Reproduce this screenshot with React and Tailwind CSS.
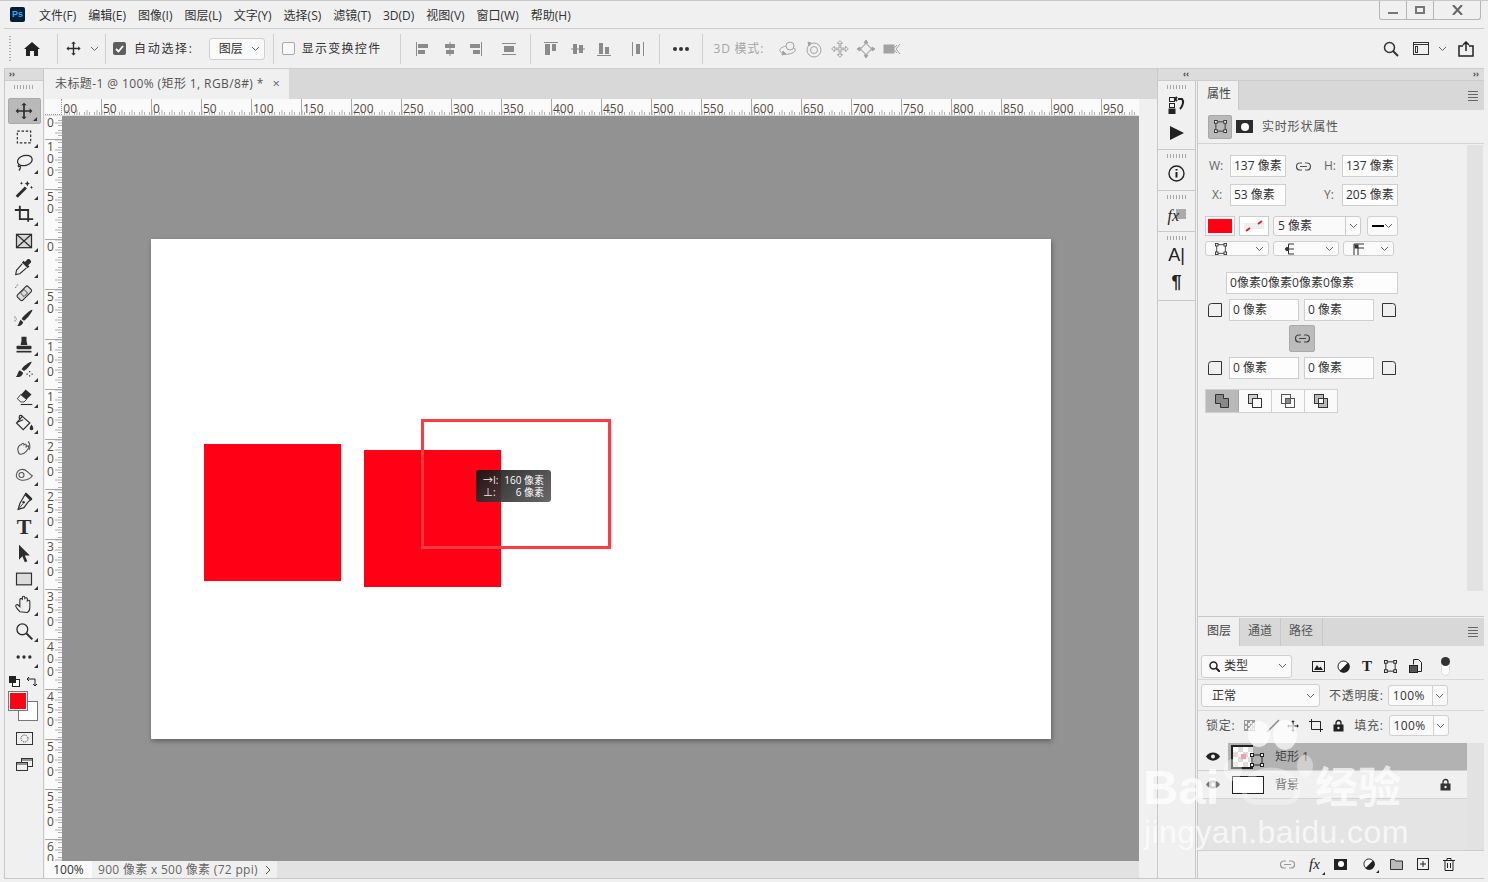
const menus = ["文件(F)", "编辑(E)", "图像(I)", "图层(L)", "文字(Y)", "选择(S)", "滤镜(T)", "3D(D)", "视图(V)", "窗口(W)", "帮助(H)"];
const rulerLabels = ["50", "0", "50", "100", "150", "200", "250", "300", "350", "400", "450", "500", "550", "600", "650", "700", "750", "800", "850", "900", "950"];
const vRuler = ["100", "50", "0", "50", "100", "150", "200", "250", "300", "350", "400", "450", "500", "550", "600"];

const Ico = ({ size = 20, view = 24, className = "text-[#2d2d2d]", children }) => (
  <svg width={size} height={size} viewBox={`0 0 ${view} ${view}`} className={`shrink-0 ${className}`} fill="none" stroke="none">
    {children}
  </svg>
);

const Chevron = ({ className = "text-[#666]" }) => (
  <svg width="9" height="6" viewBox="0 0 9 6" className={`shrink-0 ${className}`} fill="none" stroke="currentColor">
    <path d="M1 1l3.500 3.500L8 1" />
  </svg>
);

const Sep = ({ className = "" }) => <div className={`w-px h-[30px] bg-[#d0d0d0] shrink-0 ${className}`} />;
const Grip = () => <div className="h-[4px] w-[20px] mx-auto bg-[repeating-linear-gradient(90deg,#a8a8a8_0,#a8a8a8_1px,transparent_1px,transparent_3px)]" />;
const Menu = () => (
  <div className="flex flex-col gap-[2px] w-[10px]">
    <div className="h-px bg-[#666]" />
    <div className="h-px bg-[#666]" />
    <div className="h-px bg-[#666]" />
    <div className="h-px bg-[#666]" />
  </div>
);

const moveD = "M12 2l3.200 3.200H13V11h5.800V8.800L22 12l-3.200 3.200V13H13v5.800h2.200L12 22l-3.200-3.200H11V13H5.200v2.200L2 12l3.200-3.200V11H11V5.200H8.800z";
const Check = () => (
  <div className="w-[13px] h-[13px] rounded-[2px] bg-[#5f5f5f] flex items-center justify-center shrink-0">
    <svg width="9" height="8" viewBox="0 0 9 8" fill="none" stroke="white" strokeWidth="1.800"><path d="M1 4l2.500 2.500L8 1" /></svg>
  </div>
);

const AlignH = ({ type }) => (
  <Ico size={16} view={16} className="text-[#8b8b8b]">
    <g fill="currentColor">
      {type === 0 && <><rect x="1" y="1" width="1" height="14" /><rect x="3" y="3" width="10" height="4" /><rect x="3" y="9" width="7" height="4" /></>}
      {type === 1 && <><rect x="7.500" y="1" width="1" height="14" /><rect x="3" y="3" width="10" height="4" /><rect x="4" y="9" width="8" height="4" /></>}
      {type === 2 && <><rect x="14" y="1" width="1" height="14" /><rect x="3" y="3" width="10" height="4" /><rect x="6" y="9" width="7" height="4" /></>}
      {type === 3 && <><rect x="1" y="2" width="14" height="1" /><rect x="1" y="13" width="14" height="1" /><rect x="3" y="5" width="10" height="6" /></>}
      {type === 4 && <><rect x="1" y="1" width="14" height="1" /><rect x="2" y="3" width="5" height="11" /><rect x="9" y="3" width="4" height="7" /></>}
      {type === 5 && <><rect x="1" y="7.500" width="14" height="1" /><rect x="3" y="3" width="4" height="10" /><rect x="9" y="4" width="4" height="8" /></>}
      {type === 6 && <><rect x="1" y="14" width="14" height="1" /><rect x="3" y="2" width="4" height="11" /><rect x="9" y="6" width="4" height="7" /></>}
      {type === 7 && <><rect x="2" y="1" width="1" height="14" /><rect x="13" y="1" width="1" height="14" /><rect x="6" y="3" width="4" height="10" /></>}
    </g>
  </Ico>
);

const Mode3D = ({ type }) => (
  <Ico size={20} view={20} className="text-[#a2a2a2]">
    <g stroke="currentColor" fill="none">
      {type === 0 && <><circle cx="12" cy="7" r="4" /><path d="M8 7C4 8 1 10 2 12s5 4 9 3 7-2 6-5c-.5-1-1-1.500-2-2" /><path d="M5 12l3 3-4 1z" fill="currentColor" /></>}
      {type === 1 && <><circle cx="10" cy="11" r="7" /><circle cx="10" cy="11" r="3.500" /><path d="M4 3l3 1-2 3z" fill="currentColor" /></>}
      {type === 2 && <path d={moveD} transform="translate(0 0) scale(.83)" strokeWidth="1.200" />}
      {type === 3 && <><rect x="6" y="6" width="8" height="8" transform="rotate(45 10 10)" /><path d="M10 1l2 3H8zM10 19l2-3H8zM1 10l3-2v4zM19 10l-3-2v4z" fill="currentColor" /></>}
      {type === 4 && <><rect x="2" y="6" width="10" height="8" fill="currentColor" /><path d="M12 9l3-3M12 11l3 3M18 5l-4 5 4 5" /></>}
    </g>
  </Ico>
);

const Tool = ({ active, children }) => (
  <div className={`h-[26px] w-[33px] mx-auto flex items-center justify-center relative rounded-[2px] ${active ? "bg-[#b9b9b9] border border-[#aaa]" : ""}`}>
    {children}
    <div className="absolute right-[3px] bottom-[2px] w-0 h-0 border-l-[4px] border-l-transparent border-b-[4px] border-b-[#333]" />
  </div>
);

const toolIcons = [
  <path key="a" d={moveD} fill="currentColor" />,
  <rect key="b" x="4" y="5" width="16" height="14" stroke="currentColor" strokeWidth="1.400" strokeDasharray="3 2" />,
  <g key="c" stroke="currentColor" strokeWidth="1.500"><ellipse cx="13" cy="9" rx="9" ry="6" transform="rotate(-15 13 9)" /><path d="M6 14c-2 2 0 3 1 2s1 3-1 5" /></g>,
  <g key="d" fill="currentColor"><path d="M2 20l11-11 2.500 2.500-11 11z" /><path d="M16 2l1 2.500 2 1-2 1-1 2.500-1-2.500-2-1 2-1zM21 8l.7 1.500 1.300.5-1.300.5-.7 1.500-.7-1.500-1.300-.5 1.300-.5zM9 3l.6 1.400L11 5l-1.400.6L9 7l-.6-1.400L7 5l1.400-.6z" /></g>,
  <g key="e" stroke="currentColor" strokeWidth="2.200"><path d="M1 6h16v14" /><path d="M7 1v16h16" /></g>,
  <g key="f" stroke="currentColor" strokeWidth="1.500"><rect x="3" y="4" width="18" height="16" fill="#d8d8d8" /><path d="M3 4l18 16M21 4L3 20" /></g>,
  <g key="g"><path d="M16 3c2-2 6 2 4 4l-3 3 1.500 1.500-2 2-7-7 2-2L13 6z" fill="currentColor" /><path d="M10 8l-7 8-1 5 5-1 8-7" stroke="currentColor" strokeWidth="1.300" /></g>,
  <g key="h"><rect x="3" y="8" width="18" height="9" rx="2" transform="rotate(-45 12 12)" fill="#ddd" stroke="currentColor" strokeWidth="1.300" /><rect x="9" y="9" width="6" height="6" transform="rotate(-45 12 12)" stroke="currentColor" /><path d="M2 6a4 4 0 0 1 4-4" stroke="currentColor" strokeDasharray="1.500 1.500" /></g>,
  <g key="i" fill="currentColor"><path d="M22 1c1 1-6 11-10 13l-3-2C11 8 21 0 22 1z" /><path d="M8 13l3 3c-1 4-5 5-7 4 2-1 2-5 4-7z" /><path d="M1 9c1 1 3 3 1 5s-4-2-1-5z" stroke="currentColor" strokeWidth=".5" fillOpacity="0" /></g>,
  <g key="j" fill="currentColor"><path d="M9 2h6v4c0 3 1 4 1 6H8c0-2 1-3 1-6z" /><rect x="3" y="13" width="18" height="4" rx="1" /><rect x="3" y="19" width="18" height="2" /></g>,
  <g key="k" fill="currentColor"><path d="M21 1c1 1-5 9-9 11l-3-2c2-4 11-10 12-9z" /><path d="M7 11l4 3c-1 5-6 6-9 5 3-2 2-6 5-8z" /><path d="M15 15h1.500v1.500H15zM18 12h1.500v1.500H18zM18 17h1.500v1.500H18zM21 15h1.500v1.500H21z" /></g>,
  <g key="l"><path d="M14 3l7 6-9 9H8l-4-4z" fill="currentColor" /><path d="M4 14l4 4h4l3-3-7-6z" fill="#eee" stroke="currentColor" /><path d="M8 21h14" stroke="currentColor" strokeWidth="1.300" /></g>,
  <g key="m" stroke="currentColor" strokeWidth="1.400"><path d="M10 4l9 8-8 8-8-8z" /><path d="M4 11l7-3" /><path d="M10 4c-3-3-5 0-3 4" /><path d="M21 15c2 3 2 5 0 5s-2-2 0-5z" fill="currentColor" /></g>,
  <g key="n" stroke="#555" strokeWidth="1.300"><path d="M5 15c-2-4 2-9 4-8 1-3 3-2 3 0 2-2 4 0 2 3l3-2c2 1-1 7-5 9s-6 2-7-2z" /><path d="M17 3c2 2 3 7 1 10" /></g>,
  <g key="o" stroke="#555" strokeWidth="1.300"><path d="M3 11c2-7 9-7 13-3 2 2 4 4 6 5-2 4-9 6-14 5-4-1-6-4-5-7z" /><circle cx="9" cy="12" r="3" /></g>,
  <g key="p"><path d="M14 3l7 7-4 3-5 7-7 2 2-7 4-7z" stroke="currentColor" strokeWidth="1.400" /><path d="M15 2l7 7-3 2-6-6z" fill="currentColor" /><path d="M5 22l6-7" stroke="currentColor" /><circle cx="11.500" cy="13.500" r="1.500" fill="currentColor" /></g>,
  null,
  <path key="r" d="M6 2l13 13h-6l3 7-3 1-3-7-4 4z" fill="currentColor" />,
  <rect key="s" x="3" y="5" width="18" height="14" fill="#dcdcdc" stroke="currentColor" strokeWidth="1.400" />,
  <path key="t" d="M7 20c-2-2-5-5-5-7 0-1 2-2 3-1l2 2V6c0-2 2-2 3-1V3c0-2 3-2 3 0v1c1-1 3-1 3 1v2c1-1 3-1 3 1v7c0 3-1 5-3 6z" stroke="currentColor" strokeWidth="1.300" />,
  <g key="u" stroke="currentColor" strokeWidth="1.600"><circle cx="10" cy="10" r="6.500" /><path d="M15 15l7 7" strokeWidth="2.400" /></g>,
  <g key="v" fill="currentColor"><circle cx="5" cy="12" r="2" /><circle cx="12" cy="12" r="2" /><circle cx="19" cy="12" r="2" /></g>,
];

const Field = ({ children, className = "" }) => (
  <div className={`h-[22px] bg-[#fdfdfd] border border-[#cfcfcf] flex items-center pl-[3px] text-[12px] text-[#333] shrink-0 whitespace-nowrap overflow-hidden ${className}`}>{children}</div>
);

const Drop = ({ className = "", children }) => (
  <div className={`bg-[#fafafa] border border-[#cfcfcf] rounded-[3px] flex items-center justify-between pr-[4px] shrink-0 ${className}`}>
    {children}
    <Chevron />
  </div>
);

const Corner = ({ r }) => (
  <svg width="14" height="14" viewBox="0 0 14 14" fill="none" stroke="#333" className="shrink-0">
    <path d={r ? "M.5.5h10a3 3 0 0 1 3 3v10H.5z" : "M3.500.5h10v13H.5v-10a3 3 0 0 1 3-3z"} />
  </svg>
);

const LinkIco = ({ c = "#555" }) => (
  <svg width="15" height="9" viewBox="0 0 15 9" fill="none" stroke={c} strokeWidth="1.200">
    <path d="M6 1H4a3.500 3.500 0 0 0 0 7h2M9 1h2a3.500 3.500 0 0 1 0 7H9M4 4.500h7" />
  </svg>
);

const ShapeIco = ({ size = 14, c = "#333" }) => (
  <svg width={size} height={size} viewBox="0 0 14 14" fill="none" stroke={c} className="shrink-0">
    <rect x="2" y="2" width="10" height="10" />
    <rect x=".5" y=".5" width="3" height="3" fill="#eee" />
    <rect x="10.500" y=".5" width="3" height="3" fill="#eee" />
    <rect x=".5" y="10.500" width="3" height="3" fill="#eee" />
    <rect x="10.500" y="10.500" width="3" height="3" fill="#eee" />
  </svg>
);

const CornerTip = () => <div className="absolute -bottom-[3px] -right-[4px] w-0 h-0 border-l-[3px] border-l-transparent border-b-[3px] border-b-[#222]" />;

const Eye = ({ c = "#222" }) => (
  <svg width="14" height="9" viewBox="0 0 14 9"><path d="M0 4.500C3-1 11-1 14 4.500 11 10 3 10 0 4.500z" fill={c} /><circle cx="7" cy="4.500" r="2" fill="#eee" /></svg>
);

const Lock = ({ c = "#222" }) => (
  <svg width="11" height="13" viewBox="0 0 11 13"><path d="M3 6V4a2.500 2.500 0 0 1 5 0v2" fill="none" stroke={c} strokeWidth="1.300" /><rect x=".5" y="5.500" width="10" height="7" fill={c} /><circle cx="5.500" cy="9" r="1.200" fill="#eee" /></svg>
);

export default function App() {
  return (
    <div className="relative w-[1488px] h-[882px] overflow-hidden bg-[#f0f0f0] text-[#333] text-[12px] font-['Open_Sans','Noto_Sans_CJK_SC',sans-serif] flex flex-col">
      {/* menu bar */}
      <div className="h-[28px] border-t border-[#c8c8c8] flex items-start shrink-0">
        <div className="ml-[10px] mt-[6px] w-[15px] h-[15px] bg-[#001e36] rounded-[2px] text-[#31a8ff] text-[9px] font-bold leading-[15px] text-center font-['Liberation_Sans',sans-serif]">Ps</div>
        <div className="flex gap-[12px] ml-[14px] mt-[6px] leading-[18px]">
          {menus.map((m) => <span key={m} className="whitespace-nowrap">{m}</span>)}
        </div>
        <div className="ml-auto mr-[7px] flex h-[19px] border border-t-0 border-[#b5b5b5] rounded-b-[3px]">
          <div className="w-[27px] flex items-end justify-center pb-[5px] border-r border-[#b5b5b5]"><div className="w-[10px] h-[2px] bg-[#777]" /></div>
          <div className="w-[27px] flex items-center justify-center border-r border-[#b5b5b5]"><div className="w-[10px] h-[8px] border-2 border-[#777]" /></div>
          <div className="w-[46px] flex items-center justify-center">
            <svg width="11" height="10" viewBox="0 0 11 10" stroke="#666" strokeWidth="2"><path d="M1 0l9 10M10 0L1 10" /></svg>
          </div>
        </div>
      </div>

      {/* options bar */}
      <div className="h-[41px] ml-[4px] mr-[4px] border-t border-b border-[#cdcdcd] flex items-center shrink-0 relative">
        <div className="w-[2px] h-[26px] ml-[5px] bg-[repeating-linear-gradient(180deg,#aaa_0,#aaa_1px,transparent_1px,transparent_3px)]" />
        <svg width="16" height="14" viewBox="0 0 16 14" className="ml-[13px]" fill="#222"><path d="M8 0l8 7h-2v7h-4V9H6v5H2V7H0z" /></svg>
        <Sep className="ml-[17px]" />
        <Ico size={17} className="text-[#2d2d2d] ml-[7px]"><path d={moveD} fill="currentColor" /></Ico>
        <span className="ml-[8px]"><Chevron /></span>
        <Sep className="ml-[6px]" />
        <div className="ml-[7px]"><Check /></div>
        <span className="ml-[8px] tracking-[1.700px] whitespace-nowrap">自动选择:</span>
        <Drop className="ml-[15px] w-[56px] h-[22px] pl-[9px]"><span>图层</span></Drop>
        <Sep className="ml-[8px]" />
        <div className="ml-[8px] w-[13px] h-[13px] border border-[#aaa] rounded-[2px] bg-[#f8f8f8]" />
        <span className="ml-[7px] tracking-[1.300px] whitespace-nowrap">显示变换控件</span>
        <Sep className="ml-[19px]" />
        <div className="ml-[14px]"><AlignH type={0} /></div>
        <div className="ml-[11px]"><AlignH type={1} /></div>
        <div className="ml-[9px]"><AlignH type={2} /></div>
        <div className="ml-[18px]"><AlignH type={3} /></div>
        <Sep className="ml-[13px]" />
        <div className="ml-[12px]"><AlignH type={4} /></div>
        <div className="ml-[11px]"><AlignH type={5} /></div>
        <div className="ml-[10px]"><AlignH type={6} /></div>
        <div className="ml-[18px]"><AlignH type={7} /></div>
        <Sep className="ml-[13px]" />
        <div className="ml-[13px] flex gap-[2px]">
          <div className="w-[4px] h-[4px] rounded-full bg-[#333]" />
          <div className="w-[4px] h-[4px] rounded-full bg-[#333]" />
          <div className="w-[4px] h-[4px] rounded-full bg-[#333]" />
        </div>
        <Sep className="ml-[13px]" />
        <span className="ml-[10px] text-[#a6a6a6] tracking-[0.8px] whitespace-nowrap">3D 模式:</span>
        <div className="ml-[14px] flex gap-[6px]">
          {[0, 1, 2, 3, 4].map((t) => <Mode3D key={t} type={t} />)}
        </div>
        <div className="ml-auto flex items-center">
          <svg width="16" height="16" viewBox="0 0 16 16" fill="none" stroke="#333" strokeWidth="1.500"><circle cx="6.500" cy="6.500" r="5" /><path d="M10 10l5 5" strokeWidth="2" /></svg>
          <svg width="16" height="13" viewBox="0 0 16 13" fill="none" stroke="#333" className="ml-[14px]"><rect x=".5" y=".5" width="15" height="12" /><path d="M.5 2.500h15" /><rect x="2.500" y="4.500" width="2" height="6" /></svg>
          <span className="ml-[9px]"><Chevron /></span>
          <svg width="16" height="16" viewBox="0 0 16 16" fill="none" stroke="#222" strokeWidth="1.500" className="ml-[11px] mr-[10px]"><path d="M5 5H1v10h14V5h-4M8 10V1M5 4l3-3 3 3" /></svg>
        </div>
      </div>

      {/* work area */}
      <div className="flex-1 min-h-0 flex mx-[4px] mb-[3px] border-b border-[#c8c8c8]">
        {/* tools */}
        <div className="w-[40px] border-x border-[#c8c8c8] flex flex-col shrink-0">
          <div className="h-[12px] bg-[#dcdcdc] border-b border-[#ccc] text-[8px] leading-[10px] pl-[4px] font-bold text-[#444]">››</div>
          <div className="pt-[4px] pb-[9px]"><Grip /></div>
          {toolIcons.map((ic, i) => (
            <Tool key={i} active={i === 0}>
              {i === 16
                ? <span className="font-['Liberation_Serif',serif] font-bold text-[22px] leading-none text-[#2d2d2d]">T</span>
                : <Ico size={20} className={i === 13 || i === 14 ? "text-[#555]" : "text-[#2d2d2d]"}>{ic}</Ico>}
            </Tool>
          ))}
          <div className="mt-[5px] flex items-center pl-[4px] h-[12px]">
            <svg width="11" height="11" viewBox="0 0 11 11"><rect x="3.500" y="3.500" width="7" height="7" fill="#fff" stroke="#222" /><rect x="0" y="0" width="7" height="7" fill="#222" /></svg>
            <svg width="11" height="11" viewBox="0 0 11 11" fill="none" stroke="#222" className="ml-[7px]"><path d="M0 3h8v7M2 1L0 3l2 2M6 8l2 2 2-2" /></svg>
          </div>
          <div className="relative h-[31px] mt-[4px] ml-[3px]">
            <div className="absolute left-[10px] top-[10px] w-[20px] h-[20px] bg-white border border-[#777]" />
            <div className="absolute left-0 top-0 w-[20px] h-[20px] bg-[#ff0015] border border-[#777] outline outline-1 outline-white -outline-offset-2" />
          </div>
          <div className="mt-[10px] flex justify-center">
            <svg width="17" height="13" viewBox="0 0 17 13" fill="none" stroke="#333"><rect x=".5" y=".5" width="16" height="12" /><circle cx="8.500" cy="6.500" r="3.500" strokeDasharray="1 1" /></svg>
          </div>
          <div className="mt-[13px] flex justify-center">
            <svg width="17" height="13" viewBox="0 0 17 13" fill="#f0f0f0" stroke="#333"><rect x="5.500" y=".5" width="11" height="8" /><path d="M5.500 2h11" /><rect x=".5" y="4.500" width="11" height="8" /><path d="M.5 6h11" /></svg>
          </div>
        </div>

        {/* document */}
        <div className="ml-px w-[1112px] flex flex-col shrink-0 min-h-0">
          <div className="h-[30px] bg-[#d8d8d8] shrink-0 flex">
            <div className="w-[244px] bg-[#f0f0f0] flex items-center pl-[10px] text-[#555] whitespace-nowrap">
              <span className="tracking-[0.4px]">未标题-1 @ 100% (矩形 1, RGB/8#) *</span>
              <span className="ml-auto mr-[9px] text-[#666] text-[13px]">×</span>
            </div>
          </div>
          <div className="flex flex-1 min-h-0">
            <div className="w-[1094px] flex flex-col min-h-0">
              {/* ruler top */}
              <div className="h-[17px] flex shrink-0 bg-[#fafafa] border-b border-[#ddd] overflow-hidden text-[12px] leading-[19px] text-[#5a4a40]">
                <div className="w-[17px] shrink-0 border-b border-dotted border-[#999] border-r" />
                <div className="w-[39px] shrink-0 flex justify-end bg-[linear-gradient(90deg,#b0b0b0_1px,transparent_1px),linear-gradient(90deg,#b0b0b0_1px,transparent_1px)] bg-[size:5px_3px,10px_5px] bg-bottom bg-repeat-x pr-[24px]"><span>00</span></div>
                {rulerLabels.map((l, i) => (
                  <div key={i} className="w-[50px] shrink-0 border-l border-[#a8a8a8] pl-px bg-[linear-gradient(90deg,#b0b0b0_1px,transparent_1px),linear-gradient(90deg,#b0b0b0_1px,transparent_1px)] bg-[size:5px_3px,10px_5px] bg-bottom bg-repeat-x"><span>{l}</span></div>
                ))}
              </div>
              <div className="flex-1 min-h-0 flex">
                {/* ruler left */}
                <div className="w-[17px] shrink-0 bg-[#fafafa] overflow-hidden text-[12px] leading-[12.300px] text-[#5a4a40] flex flex-col">
                  <div className="h-[23px] shrink-0 pl-[2px] pt-px bg-[linear-gradient(180deg,#b0b0b0_1px,transparent_1px),linear-gradient(180deg,#b0b0b0_1px,transparent_1px)] bg-[size:4px_5px,7px_10px] bg-right bg-repeat-y">0</div>
                  {vRuler.map((l, i) => (
                    <div key={i} className="h-[50px] shrink-0 border-t border-[#a8a8a8] pl-[2px] pt-px bg-[linear-gradient(180deg,#b0b0b0_1px,transparent_1px),linear-gradient(180deg,#b0b0b0_1px,transparent_1px)] bg-[size:4px_5px,7px_10px] bg-right bg-repeat-y">
                      <div className="w-[8px] break-all">{l}</div>
                    </div>
                  ))}
                </div>
                {/* canvas */}
                <div className="w-[1077px] bg-[#929292] pl-[89px] pt-[123px] overflow-hidden">
                  <div className="relative w-[900px] h-[500px] bg-white shadow-[1px_2px_5px_rgba(0,0,0,0.35)]">
                    <div className="absolute left-[53px] top-[205px] w-[137px] h-[137px] bg-[#ff0015]" />
                    <div className="absolute left-[213px] top-[211px] w-[137px] h-[137px] bg-[#ff0015]" />
                    <div className="absolute left-[270px] top-[180px] w-[190px] h-[130px] border-[3px] border-[#ff3a40]" />
                    <div className="absolute left-[325px] top-[231px] w-[75px] h-[32px] rounded-[3px] bg-[linear-gradient(135deg,#141414,#5c5c5c)] opacity-[0.92] text-white text-[10px] leading-[12px] pt-[4px] px-[7px]">
                      <div className="flex justify-between whitespace-nowrap"><span>→I:</span><span>160 像素</span></div>
                      <div className="flex justify-between whitespace-nowrap"><span>⊥:</span><span>6 像素</span></div>
                    </div>
                  </div>
                </div>
              </div>
              {/* status */}
              <div className="h-[17px] shrink-0 flex items-center bg-[#e2e2e2] leading-[17px]">
                <div className="w-[47px] h-full bg-[#fafafa] text-center">100%</div>
                <div className="w-[185px] h-full bg-[#f0f0f0] flex items-center pl-[6px] text-[#666] whitespace-nowrap">
                  <span className="tracking-[0.3px]">900 像素 x 500 像素 (72 ppi)</span>
                  <svg width="6" height="10" viewBox="0 0 6 10" fill="none" stroke="#555" className="ml-auto mr-[6px]"><path d="M1 1l4 4-4 4" /></svg>
                </div>
              </div>
            </div>
            <div className="w-[18px] shrink-0 bg-[#f0f0f0]" />
          </div>
        </div>

        {/* right dock */}
        <div className="flex-1 min-w-0 flex flex-col border-l border-[#c8c8c8]">
          <div className="h-[12px] shrink-0 bg-[#dcdcdc] border-b border-[#ccc] flex justify-between pl-[25px] pr-[5px] text-[8px] leading-[10px] font-bold text-[#444]">
            <span>‹‹</span><span>››</span>
          </div>
          <div className="flex-1 min-h-0 flex">
            {/* icon strip */}
            <div className="w-[38px] shrink-0 border-r border-[#c8c8c8] flex flex-col">
              <div className="h-[69px] border-b border-[#c8c8c8] flex flex-col items-center pt-[4px]">
                <Grip />
                <svg width="18" height="18" viewBox="0 0 18 18" className="mt-[7px]" fill="none" stroke="#222"><rect x="1.500" y="1.500" width="5" height="4" /><rect x="1.500" y="7.500" width="5" height="4" /><rect x="1" y="13" width="6" height="5" fill="#222" /><path d="M10 3h4c2 2 1 7-2 10M9 1l-2 2 2 2" strokeWidth="2" /></svg>
                <svg width="14" height="14" viewBox="0 0 14 14" className="mt-[12px]" fill="#222"><path d="M0 0l14 7-14 7z" /></svg>
              </div>
              <div className="h-[41px] border-b border-[#c8c8c8] flex flex-col items-center pt-[4px]">
                <Grip />
                <svg width="17" height="17" viewBox="0 0 17 17" className="mt-[7px]" fill="none" stroke="#222" strokeWidth="1.400"><circle cx="8.500" cy="8.500" r="7.500" /><path d="M8.500 7v5.500" strokeWidth="2" /><path d="M8.500 4v1.500" strokeWidth="2" /></svg>
              </div>
              <div className="h-[41px] border-b border-[#c8c8c8] flex flex-col items-center pt-[4px]">
                <Grip />
                <div className="relative mt-[7px] w-[18px] h-[20px]">
                  <div className="absolute right-0 top-[3px] w-[10px] h-[10px] bg-[#aaa]" />
                  <span className="absolute left-0 top-0 font-['Liberation_Serif',serif] italic text-[16px] leading-[20px] text-[#222]">fx</span>
                </div>
              </div>
              <div className="h-[69px] border-b border-[#c8c8c8] flex flex-col items-center pt-[4px]">
                <Grip />
                <span className="font-['Liberation_Sans',sans-serif] text-[18px] leading-[22px] mt-[4px] text-[#222]">A|</span>
                <span className="font-['Liberation_Sans',sans-serif] text-[18px] leading-[22px] mt-[5px] font-bold text-[#222]">¶</span>
              </div>
            </div>

            {/* panels */}
            <div className="ml-px flex-1 min-w-0 flex flex-col border-l border-[#c8c8c8]">
              {/* properties */}
              <div className="h-[536px] shrink-0 flex flex-col border-b border-[#c8c8c8]">
                <div className="h-[29px] bg-[#d8d8d8] flex justify-between items-center pr-[6px] shrink-0">
                  <div className="w-[41px] h-full bg-[#f0f0f0] border-r border-[#c8c8c8] pl-[9px] leading-[26px] text-[#444]">属性</div>
                  <Menu />
                </div>
                <div className="h-[34px] flex items-center pl-[10px] border-b border-[#d4d4d4] shrink-0">
                  <div className="w-[24px] h-[24px] bg-[#b9b9b9] border border-[#a8a8a8] rounded-[2px] flex items-center justify-center"><ShapeIco size={13} /></div>
                  <div className="w-[17px] h-[13px] bg-[#2c2c2c] ml-[4px] flex items-center justify-center"><div className="w-[8px] h-[8px] rounded-full bg-white" /></div>
                  <span className="ml-[9px] text-[#555] tracking-[0.8px]">实时形状属性</span>
                </div>
                <div className="flex flex-1 min-h-0">
                  <div className="w-[269px] shrink-0 pl-[7px] pt-[11px] flex flex-col">
                    <div className="flex items-center h-[22px]">
                      <span className="w-[24px] pl-[4px] text-[#666]">W:</span>
                      <Field className="w-[56px] ml-[1px]">137 像素</Field>
                      <span className="ml-[10px]"><LinkIco /></span>
                      <span className="ml-[13px] w-[18px] text-[#666]">H:</span>
                      <Field className="w-[56px]">137 像素</Field>
                    </div>
                    <div className="flex items-center h-[22px] mt-[7px]">
                      <span className="w-[24px] pl-[7px] text-[#666]">X:</span>
                      <Field className="w-[56px] ml-[1px]">53 像素</Field>
                      <span className="ml-[38px] w-[18px] text-[#666]">Y:</span>
                      <Field className="w-[56px]">205 像素</Field>
                    </div>
                    <div className="flex items-center h-[20px] mt-[10px]">
                      <div className="w-[30px] h-[20px] border border-[#ccc] p-[2px] bg-[#f8f8f8]"><div className="w-full h-full bg-[#ff0015]" /></div>
                      <div className="w-[30px] h-[20px] ml-[4px] border border-[#ccc] bg-white flex items-center justify-center">
                        <svg width="20" height="12" viewBox="0 0 20 12" stroke="#e02020" strokeWidth="2"><rect x="0" y="3" width="20" height="6" fill="#eee" stroke="none" /><path d="M14 4l4-3M2 11l4-3" /></svg>
                      </div>
                      <div className="ml-[4px] w-[88px] h-[20px] flex border border-[#ccc] rounded-[3px] bg-[#fafafa]">
                        <span className="flex-1 pl-[4px] leading-[18px]">5 像素</span>
                        <div className="w-[15px] border-l border-[#ccc] flex items-center justify-center"><Chevron /></div>
                      </div>
                      <Drop className="ml-[6px] w-[31px] h-[20px] pl-[4px]"><div className="w-[12px] h-[2px] bg-black" /></Drop>
                    </div>
                    <div className="flex items-center h-[15px] mt-[5px]">
                      <Drop className="w-[64px] h-[15px] pl-[9px]"><ShapeIco size={12} /></Drop>
                      <Drop className="ml-[4px] w-[66px] h-[15px] pl-[11px]">
                        <svg width="10" height="12" viewBox="0 0 10 12" fill="none" stroke="#333"><path d="M3.500 1H9M3.500 1v10H9M3.500 6H9" /><circle cx="2" cy="6" r="1.500" fill="#333" /></svg>
                      </Drop>
                      <Drop className="ml-[4px] w-[51px] h-[15px] pl-[9px]">
                        <svg width="12" height="12" viewBox="0 0 12 12" fill="none" stroke="#333"><path d="M1 12V1h10M5 12V5h6" /><rect x="2" y="2" width="3" height="3" fill="#333" /></svg>
                      </Drop>
                    </div>
                    <Field className="w-[172px] ml-[21px] mt-[16px]"><span className="tracking-[0.05px]">0像素0像素0像素0像素</span></Field>
                    <div className="flex items-center h-[21px] mt-[5px] pl-[3px]">
                      <Corner />
                      <Field className="w-[70px] h-[21px] ml-[7px]">0 像素</Field>
                      <Field className="w-[70px] h-[21px] ml-[5px]">0 像素</Field>
                      <span className="ml-[8px]"><Corner r /></span>
                    </div>
                    <div className="h-[27px] w-[26px] mt-[5px] ml-[84px] bg-[#bcbcbc] border border-[#aaa] rounded-[2px] flex items-center justify-center"><LinkIco c="#444" /></div>
                    <div className="flex items-center h-[21px] mt-[5px] pl-[3px]">
                      <Corner />
                      <Field className="w-[70px] h-[21px] ml-[7px]">0 像素</Field>
                      <Field className="w-[70px] h-[21px] ml-[5px]">0 像素</Field>
                      <span className="ml-[8px]"><Corner r /></span>
                    </div>
                    <div className="flex mt-[11px] w-[133px] h-[24px] border border-[#d0d0d0] bg-[#fafafa]">
                      <div className="w-[33px] bg-[#b9b9b9] flex items-center justify-center border-r border-[#aaa]">
                        <svg width="14" height="14" viewBox="0 0 14 14" fill="#888" stroke="#333"><path d="M.5.5h8v4h5v9h-8v-4h-5z" /></svg>
                      </div>
                      <div className="w-[33px] flex items-center justify-center border-r border-[#d0d0d0]">
                        <svg width="14" height="14" viewBox="0 0 14 14" fill="#ccc" stroke="#333"><rect x=".5" y=".5" width="9" height="9" /><rect x="4.500" y="4.500" width="9" height="9" fill="#fff" /></svg>
                      </div>
                      <div className="w-[33px] flex items-center justify-center border-r border-[#d0d0d0]">
                        <svg width="14" height="14" viewBox="0 0 14 14" fill="none" stroke="#555"><rect x=".5" y=".5" width="9" height="9" /><rect x="4.500" y="4.500" width="9" height="9" /><rect x="4.500" y="4.500" width="5" height="5" fill="#888" /></svg>
                      </div>
                      <div className="flex-1 flex items-center justify-center">
                        <svg width="14" height="14" viewBox="0 0 14 14" fill="#bbb" stroke="#333"><rect x=".5" y=".5" width="9" height="9" /><rect x="4.500" y="4.500" width="9" height="9" /><rect x="4.500" y="4.500" width="5" height="5" fill="#fff" /></svg>
                      </div>
                    </div>
                  </div>
                  <div className="w-[16px] h-[446px] mt-px bg-[#e2e2e2]" />
                </div>
              </div>

              {/* layers */}
              <div className="flex-1 min-h-0 flex flex-col mt-px">
                <div className="h-[28px] bg-[#d8d8d8] flex items-center shrink-0 pr-[6px]">
                  <div className="w-[42px] h-full bg-[#f0f0f0] border-r border-[#c8c8c8] pl-[9px] leading-[26px] text-[#444]">图层</div>
                  <div className="w-[41px] h-full border-r border-[#c8c8c8] pl-[8px] leading-[26px] text-[#555]">通道</div>
                  <div className="w-[42px] h-full border-r border-[#c8c8c8] pl-[8px] leading-[26px] text-[#555]">路径</div>
                  <div className="ml-auto"><Menu /></div>
                </div>
                <div className="h-[34px] border-b border-[#d8d8d8] flex items-center pl-[3px] pt-[7px] shrink-0">
                  <Drop className="w-[91px] h-[23px] pl-[7px] gap-[4px]">
                    <svg width="11" height="11" viewBox="0 0 11 11" fill="none" stroke="#222" strokeWidth="1.500"><circle cx="4.500" cy="4.500" r="3.500" /><path d="M7 7l4 4" strokeWidth="2" /></svg>
                    <span className="mr-auto">类型</span>
                  </Drop>
                  <div className="ml-[20px] flex items-center gap-[12px]">
                    <svg width="13" height="11" viewBox="0 0 13 11"><rect x=".5" y=".5" width="12" height="10" fill="none" stroke="#222" /><path d="M2 9l3-5 2 3 1.500-1.500L11 9z" fill="#222" /></svg>
                    <svg width="13" height="13" viewBox="0 0 13 13"><circle cx="6.500" cy="6.500" r="5.500" fill="#fff" stroke="#222" /><path d="M11 2.500A6 6 0 0 1 2.500 11z" fill="#222" /></svg>
                    <span className="font-['Liberation_Serif',serif] font-bold text-[15px] leading-none text-[#222]">T</span>
                    <ShapeIco size={13} c="#222" />
                    <svg width="13" height="14" viewBox="0 0 13 14" fill="none" stroke="#222"><path d="M4.500.5h5l3 3v9h-4M4.500.5v5" /><rect x=".5" y="6.500" width="8" height="7" fill="#555" /></svg>
                  </div>
                  <div className="ml-[19px] w-[9px] h-[19px] rounded-full bg-white border border-[#ddd] relative"><div className="absolute -left-px -top-px w-[9px] h-[9px] rounded-full bg-[#333]" /></div>
                </div>
                <div className="h-[31px] border-b border-[#d8d8d8] flex items-center pl-[3px] pt-[1px] shrink-0">
                  <Drop className="w-[119px] h-[23px] pl-[10px]"><span>正常</span></Drop>
                  <span className="ml-[9px] text-[#555] tracking-[0.7px] whitespace-nowrap">不透明度:</span>
                  <div className="ml-[4px] w-[60px] h-[21px] flex border border-[#d0d0d0] rounded-[3px] bg-[#fafafa]">
                    <span className="flex-1 pl-[4px] leading-[19px] tracking-[0.4px]">100%</span>
                    <div className="w-[15px] border-l border-[#d0d0d0] flex items-center justify-center"><Chevron /></div>
                  </div>
                </div>
                <div className="h-[29px] flex items-center pl-[8px] shrink-0">
                  <span className="text-[#555] tracking-[0.7px] whitespace-nowrap">锁定:</span>
                  <div className="ml-[9px] w-[11px] h-[11px] border border-[#999] bg-[conic-gradient(#999_25%,#eee_0_50%,#999_0_75%,#eee_0)] bg-[size:5px_5px]" />
                  <svg width="14" height="14" viewBox="0 0 14 14" stroke="#888" strokeWidth="1.500" className="ml-[11px]"><path d="M13 1L3 11l-2 2" /></svg>
                  <Ico size={14} className="text-[#222] ml-[6px]"><path d={moveD} fill="currentColor" /></Ico>
                  <svg width="14" height="13" viewBox="0 0 14 13" fill="none" stroke="#222" className="ml-[9px]"><path d="M2.500 0v10.500H14M0 2.500h11.500V13" /></svg>
                  <span className="ml-[10px]"><Lock /></span>
                  <span className="ml-[10px] text-[#555] tracking-[0.7px] whitespace-nowrap">填充:</span>
                  <div className="ml-[5px] w-[60px] h-[21px] flex border border-[#d0d0d0] rounded-[3px] bg-[#fafafa]">
                    <span className="flex-1 pl-[4px] leading-[19px] tracking-[0.4px]">100%</span>
                    <div className="w-[15px] border-l border-[#d0d0d0] flex items-center justify-center"><Chevron /></div>
                  </div>
                </div>
                <div className="flex-1 min-h-0 flex mt-[3px]">
                  <div className="w-[269px] shrink-0 flex flex-col">
                    <div className="h-[28px] flex items-center border-b border-[#cfcfcf]">
                      <div className="w-[30px] h-full flex items-center justify-center"><Eye /></div>
                      <div className="flex-1 h-full bg-[#b2b2b2] flex items-center pl-[3px]">
                        <div className="relative w-[34px] h-[24px] shrink-0">
                          <div className="w-[22px] h-full border-l-2 border-y-2 border-[#222] bg-[conic-gradient(#ddd_25%,#fff_0_50%,#ddd_0_75%,#fff_0)] bg-[size:10px_10px] flex items-center justify-center"><div className="w-[5px] h-[5px] bg-[#ff9aa0]" /></div>
                          <div className="absolute left-[19px] top-[8px]"><ShapeIco size={14} c="#222" /></div>
                        </div>
                        <span className="ml-[10px] text-[#444]">矩形 1</span>
                      </div>
                    </div>
                    <div className="h-[28px] flex items-center border-b border-[#d4d4d4]">
                      <div className="w-[30px] h-full flex items-center justify-center"><Eye c="#777" /></div>
                      <div className="flex-1 h-full bg-[#f0f0f0] flex items-center pl-[4px]">
                        <div className="w-[32px] h-[18px] border border-[#222] bg-white" />
                        <span className="ml-[11px] text-[#777]">背景</span>
                        <span className="ml-auto mr-[16px]"><Lock c="#333" /></span>
                      </div>
                    </div>
                    <div className="flex-1 bg-[#e4e4e4]" />
                  </div>
                  <div className="flex-1 bg-[#e2e2e2]" />
                </div>
                <div className="h-[27px] border-t border-[#cfcfcf] flex items-center shrink-0 pl-[82px] mb-px">
                  <LinkIco c="#999" />
                  <div className="relative ml-[14px] w-[12px] h-[16px]">
                    <span className="font-['Liberation_Serif',serif] italic text-[15px] leading-[16px] text-[#222]">fx</span>
                    <CornerTip />
                  </div>
                  <div className="ml-[13px] w-[13px] h-[11px] bg-[#222] flex items-center justify-center"><div className="w-[6px] h-[6px] rounded-full bg-white" /></div>
                  <div className="relative ml-[16px] w-[12px] h-[12px]">
                    <svg width="12" height="12" viewBox="0 0 13 13"><circle cx="6.500" cy="6.500" r="5.500" fill="#fff" stroke="#222" /><path d="M11 2.500A6 6 0 0 1 2.500 11z" fill="#222" /></svg>
                    <CornerTip />
                  </div>
                  <svg width="13" height="11" viewBox="0 0 13 11" fill="#bbb" stroke="#333" className="ml-[15px]"><path d="M.5 10.500v-10h4l1 1.500h7v8.500z" /></svg>
                  <svg width="12" height="12" viewBox="0 0 12 12" fill="none" stroke="#222" className="ml-[14px]"><rect x=".5" y=".5" width="11" height="11" /><path d="M6 3v6M3 6h6" /></svg>
                  <svg width="12" height="13" viewBox="0 0 12 13" fill="none" stroke="#222" className="ml-[14px]"><path d="M0 2.500h12M4 2.500V.5h4v2M2 2.500v10h8v-10M4.500 5v5M7.500 5v5" /></svg>
                </div>
              </div>
            </div>
          </div>
        </div>
      </div>

      {/* baidu watermark */}
      <div className="absolute left-[1143px] top-[720px] w-[270px] h-[130px] pointer-events-none text-white/70 font-['Liberation_Sans',sans-serif]">
        <svg width="100" height="95" viewBox="0 0 100 95" className="absolute left-[78px] top-0" fill="currentColor">
          <ellipse cx="38" cy="14" rx="11" ry="13" />
          <ellipse cx="64" cy="15" rx="12" ry="15" />
          <ellipse cx="12" cy="50" rx="9" ry="11" fillOpacity="0.55" />
          <ellipse cx="84" cy="46" rx="8" ry="11" fillOpacity="0.55" />
          <path d="M50 50c-16 0-30 12-26 25 3 9 14 7 26 7s23 2 26-7c4-13-10-25-26-25z" fill="none" stroke="currentColor" strokeOpacity="0.5" strokeWidth="5" />
        </svg>
        <span className="absolute left-0 top-[39px] text-[49px] leading-[56px] font-bold">Bai</span>
        <span className="absolute left-[172px] top-[38px] text-[43px] leading-[52px] font-bold font-['Noto_Sans_CJK_SC',sans-serif]">经验</span>
        <span className="absolute left-[1px] top-[93px] text-[32px] leading-[38px] tracking-[0.4px] whitespace-nowrap">jingyan.baidu.com</span>
      </div>
    </div>
  );
}
